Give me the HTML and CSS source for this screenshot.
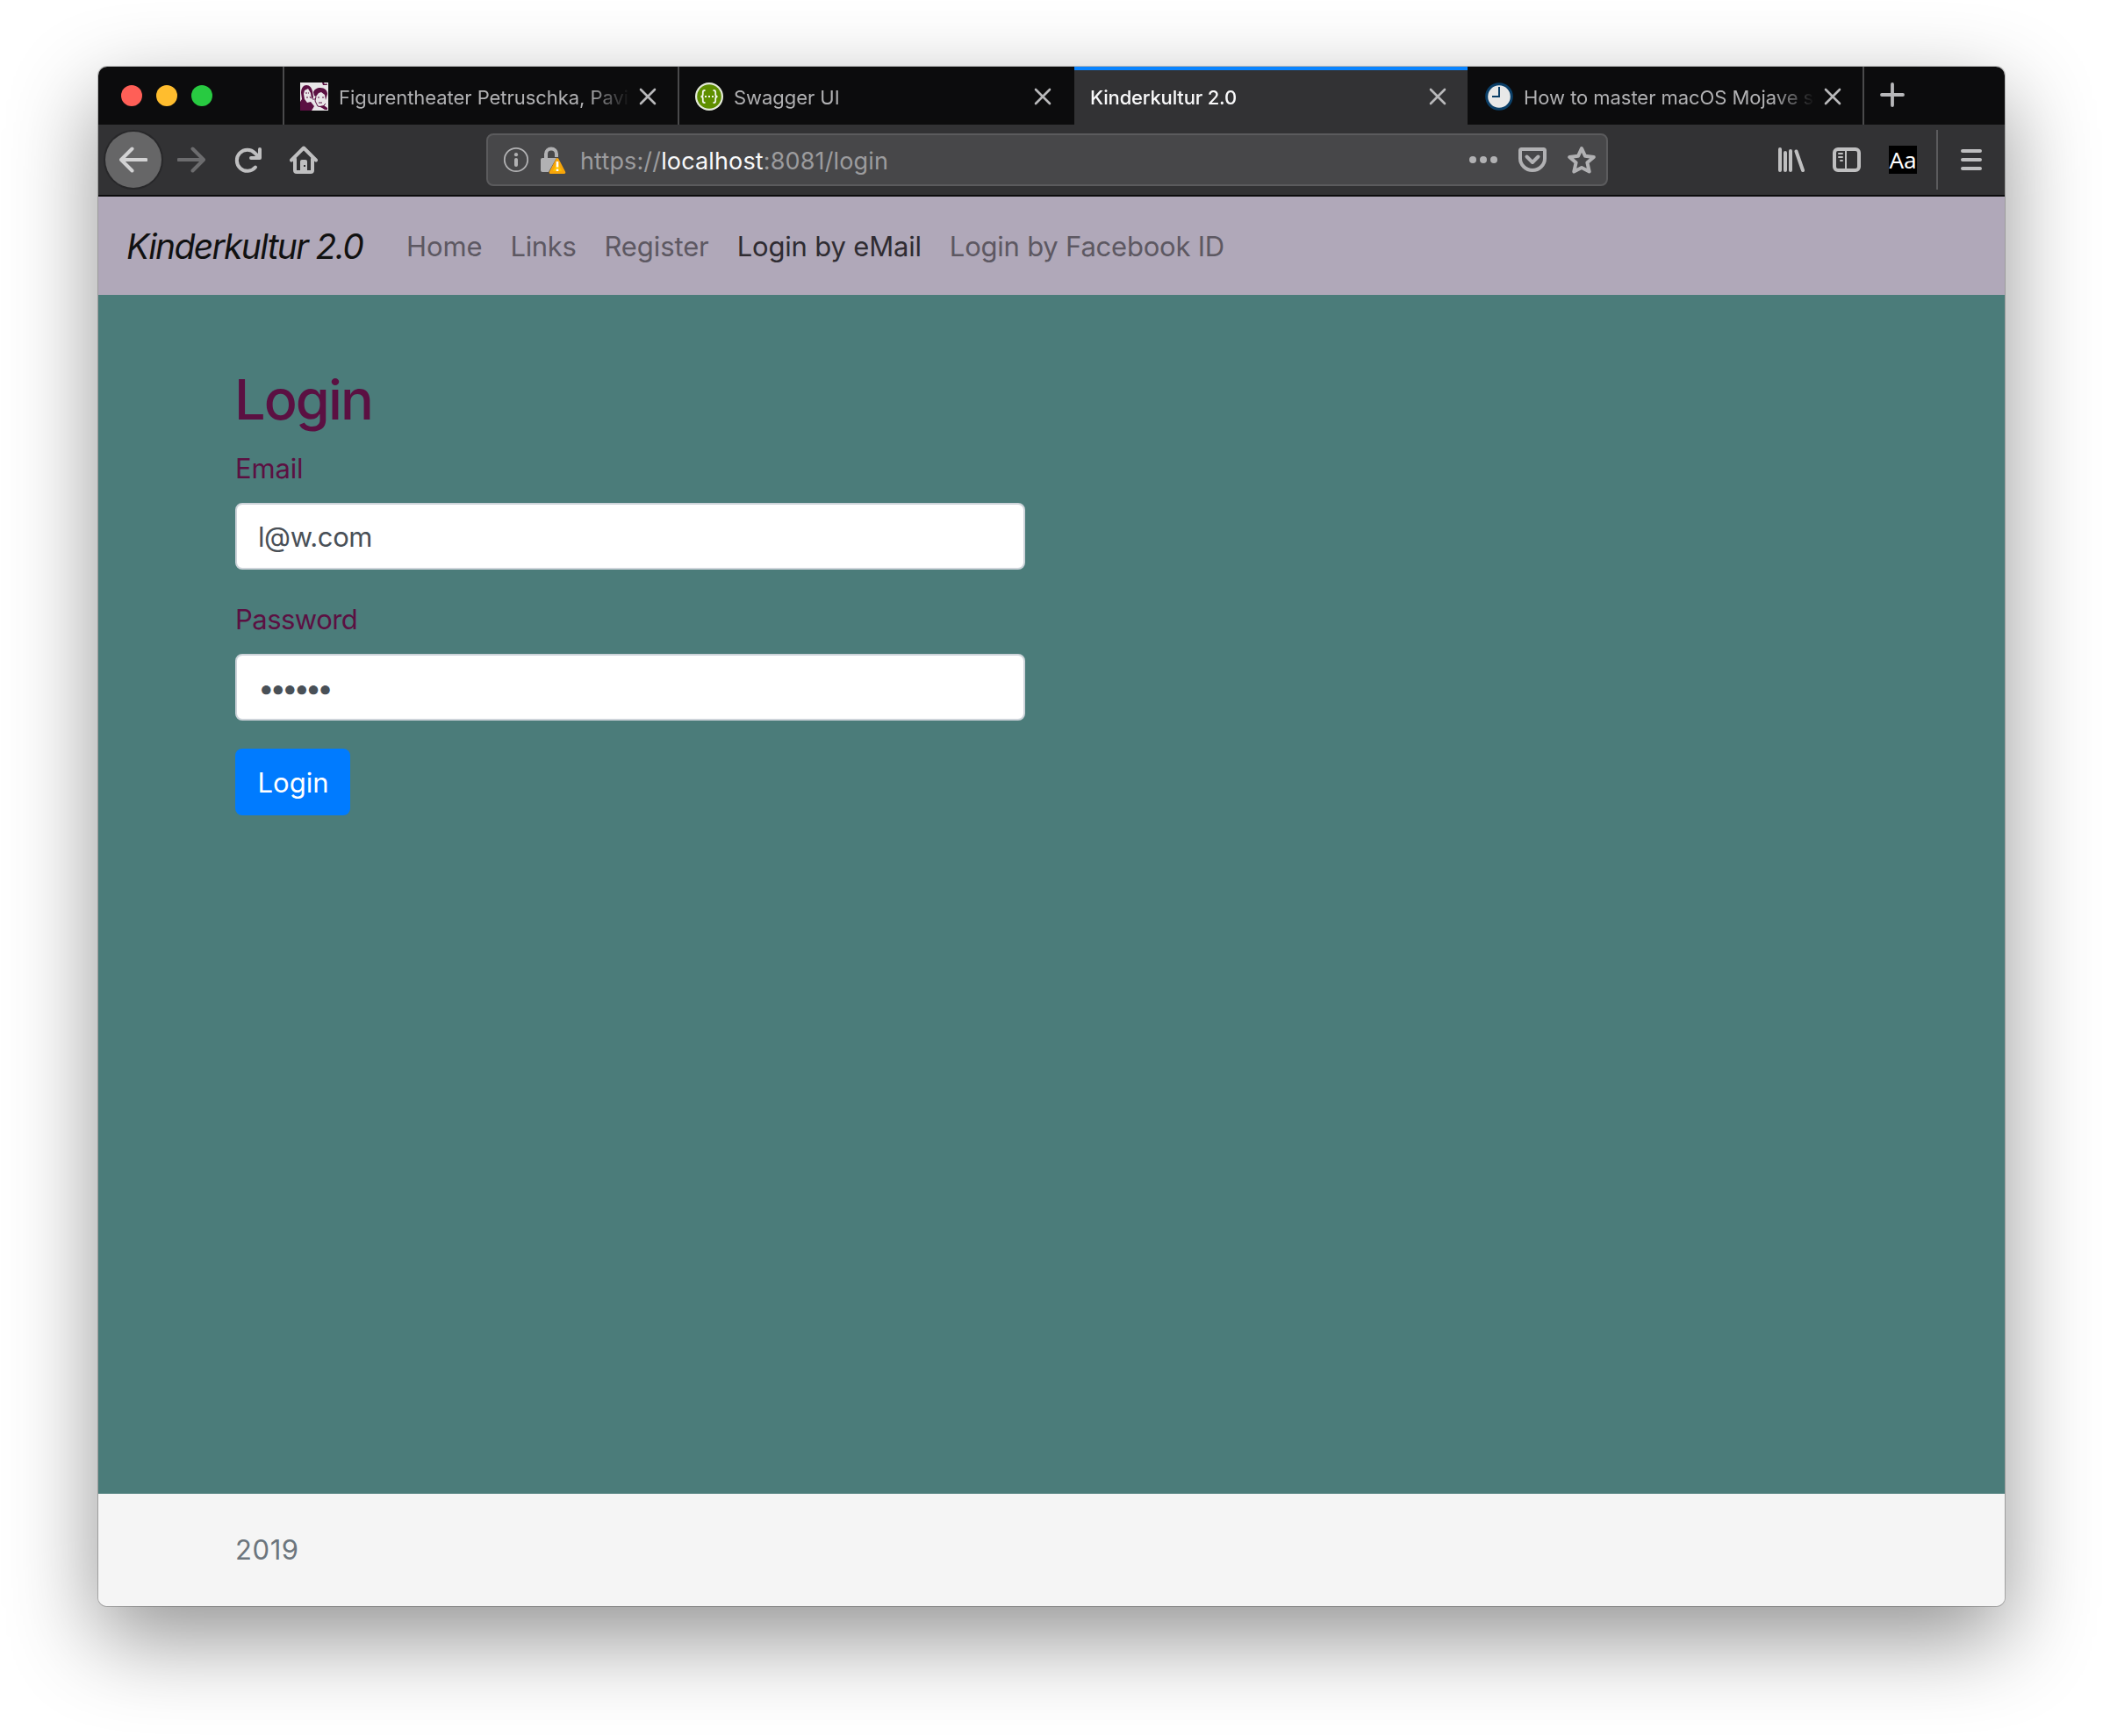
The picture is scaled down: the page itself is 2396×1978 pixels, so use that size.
FILE: index.html
```html
<!DOCTYPE html>
<html lang="en">
<head>
<meta charset="utf-8">
<title>Kinderkultur 2.0</title>
<link rel="stylesheet" href="styles.css">
</head>
<body>
<div class="window">
  <div class="tabbar">
    <div class="lights"><i class="light red"></i><i class="light yellow"></i><i class="light green"></i></div>
    <div class="tab">
      <svg class="favicon" viewBox="0 0 32 32"><rect width="32" height="32" fill="#e9e6e8"/><g fill="#5b1042"><path d="M1 12C1 6 4 3 7 3c4 0 6 3 7 7l1 7-2 2-1-7-3-5-4 2-1 4 1 6 3 4 4-1 4 5-3 5H0V22l2-3z"/><path d="M15 11c1-3 4-5 8-5 5 0 8 3 8 7l-2 7-1-6-4-3-3 1-3 4-2-1z"/><path d="M25 0l1 3h5l-1-2-2 1-1-2zM22 27l5-1 4 3v2h-3z"/></g><path d="M1 25l6 6H0zM11 16l1 2M18 16l-1 5 3 6 5 1 4-4" fill="none" stroke="#5b1042"/><path d="M6 12h2M9 12h1M7 17h2M20 17h2M25 17h2M21 23h4M14 19h3" stroke="#5b1042"/></svg>
      <span class="title">Figurentheater Petruschka, Pavillon</span>
      <svg class="close" viewBox="0 0 20 20"><path d="M2 2l16 16M18 2L2 18"/></svg>
    </div>
    <div class="tab">
      <svg class="favicon" viewBox="0 0 32 32"><circle cx="16" cy="16" r="16" fill="#e4ead9"/><circle cx="16" cy="16" r="13.8" fill="#5f8f00"/><g fill="none" stroke="#f2f5ea" stroke-width="1.8"><path d="M11.5 9H10.800q-2 0-2 2v2.500q0 2.500-2.300 2.500q2.300 0 2.300 2.500V21q0 2 2 2h.7M20.500 9h.7q2 0 2 2v2.500q0 2.500 2.300 2.500q-2.300 0-2.300 2.500V21q0 2-2 2h-.7"/></g><path d="M11 15h2v2h-2zM15 15h2v2h-2zM19 15h2v2h-2z" fill="#f2f5ea"/></svg>
      <span class="title">Swagger UI</span>
      <svg class="close" viewBox="0 0 20 20"><path d="M2 2l16 16M18 2L2 18"/></svg>
    </div>
    <div class="tab active">
      <span class="title">Kinderkultur 2.0</span>
      <svg class="close" viewBox="0 0 20 20"><path d="M2 2l16 16M18 2L2 18"/></svg>
    </div>
    <div class="tab">
      <svg class="favicon" viewBox="0 0 32 32"><circle cx="16" cy="16" r="14.300" fill="#e8e8e8" stroke="#0b3f68" stroke-width="3"/><path d="M16 5v11H8" fill="none" stroke="#0b3f68" stroke-width="2"/></svg>
      <span class="title">How to master macOS Mojave screenshots</span>
      <svg class="close" viewBox="0 0 20 20"><path d="M2 2l16 16M18 2L2 18"/></svg>
    </div>
    <svg class="plus" viewBox="0 0 28 28"><path d="M14 2v24M2 14h24"/></svg>
  </div>

  <div class="toolbar">
    <div class="nav-buttons">
      <span class="tool back"><svg viewBox="0 0 32 32"><path d="M30.500 16H2M14.500 3.500L2 16l12.500 12.500"/></svg></span>
      <span class="tool forward"><svg viewBox="0 0 32 32"><path d="M1.500 16H30M17.500 3.500L30 16 17.500 28.500"/></svg></span>
      <span class="tool"><svg viewBox="0 0 32 32"><path d="M25 24.500A12 12 0 1 1 24.500 8.500L28 12"/><path d="M30 4v10H20"/></svg></span>
      <span class="tool"><svg viewBox="0 0 32 32"><path d="M2 16.500L16 2.500l14 14"/><path d="M6 15v13q0 2 2 2h16q2 0 2-2V15"/><path d="M12 30V18q0-2 2-2h4q2 0 2 2v12z" fill="#bfbfc0" stroke="none"/><rect x="16" y="22" width="2" height="2" fill="#323234" stroke="none"/></svg></span>
    </div>
    <div class="urlbar">
      <svg class="info" viewBox="0 0 32 32"><circle cx="16" cy="16" r="13.200" fill="none" stroke="#b1b1b3" stroke-width="1.800"/><circle cx="16" cy="10.200" r="2.100"/><rect x="14" y="14" width="4" height="10" rx="2"/></svg>
      <svg class="lock" viewBox="0 0 32 32"><path d="M8 16V9.500a6 6 0 0 1 12 0V13" fill="none" stroke="#b1b1b3" stroke-width="4"/><path d="M4 14h16L11 30H4q-2 0-2-2V16q0-2 2-2z"/><path d="M21 15.500L28.800 30.500H13.200z" fill="#ffbf00" stroke="#f7a50a" stroke-width="3" stroke-linejoin="round"/><path d="M21 18v6.500M21 26.500v2.500" stroke="#fff" stroke-width="2.600"/></svg>
      <span class="url">https://<b>localhost</b>:8081/login</span>
      <svg class="u-ico" viewBox="0 0 32 32"><circle cx="4" cy="16" r="4"/><circle cx="16" cy="16" r="4"/><circle cx="28" cy="16" r="4"/></svg>
      <svg class="u-ico" viewBox="0 0 32 32"><path d="M3.500 4h25q1.500 0 1.500 1.500V14.500a14 13.500 0 0 1-28 0V5.500Q2 4 3.500 4z" class="line"/><path d="M9.500 12.500l6.500 6.500 6.500-6.500" class="line"/></svg>
      <svg class="u-ico" viewBox="0 0 32 32"><path d="M16 3l4 8.800 9.800 1.200-7.400 6.300 2.300 10.200L16 25l-8.700 4.500 2.300-10.200L2.200 13l9.800-1.200z" class="line"/></svg>
    </div>
    <div class="actions">
      <svg viewBox="0 0 32 32"><path d="M4 4v24M10 8v20M16 6v22M22.500 6.500L30 28"/></svg>
      <svg viewBox="0 0 32 32"><rect x="2" y="4" width="28" height="24" rx="4"/><path d="M15 4v24" stroke-width="2"/><path d="M7 9h4M7 13h4M9 17h2" stroke-width="2"/></svg>
      <span class="aa">Aa</span>
    </div>
    <div class="divider"></div>
    <svg class="menu" viewBox="0 0 24 24"><path d="M2 2h20M2 12h20M2 22h20"/></svg>
  </div>

  <nav class="navbar">
    <a class="brand">Kinderkultur 2.0</a>
    <a class="link">Home</a>
    <a class="link tight">Links</a>
    <a class="link">Register</a>
    <a class="link current">Login by eMail</a>
    <a class="link">Login by Facebook ID</a>
  </nav>

  <main class="content">
    <h1>Login</h1>
    <label for="email">Email</label>
    <input id="email" type="text" value="l@w.com">
    <label class="tight" for="password">Password</label>
    <input id="password" type="password" value="secret">
    <button>Login</button>
  </main>

  <footer class="footer"><span>2019</span></footer>
</div>
</body>
</html>
```
FILE: styles.css
```css
* { box-sizing: border-box; }

body {
  margin: 0;
  height: 1978px;
  padding: 76px 112px 148px;
  background: #fff;
  font-family: Inter, "Liberation Sans", sans-serif;
  overflow: hidden;
}

svg { display: block; flex: none; }

.window {
  height: 1754px;
  display: flex;
  flex-direction: column;
  border-radius: 10px;
  overflow: hidden;
  box-shadow: 0 0 0 1px rgba(0, 0, 0, .22), 0 36px 100px rgba(0, 0, 0, .43);
}

/* Tab strip */
.tabbar {
  flex: none;
  display: flex;
  align-items: center;
  height: 66px;
  background: #0c0c0d;
}

.lights {
  display: flex;
  gap: 16px;
  width: 212px;
  height: 66px;
  padding: 21px 0 0 26px;
  border-right: 2px solid #4a4a4b;
}

.light { width: 24px; height: 24px; border-radius: 50%; }
.red { background: #ff5f57; }
.yellow { background: #ffbd2e; }
.green { background: #28ca41; }

.tab {
  display: flex;
  align-items: center;
  width: 450px;
  height: 66px;
  padding: 2px 24px 0 18px;
  border-right: 2px solid #4a4a4b;
}

.tab:has(+ .active) { border-right-color: #0c0c0d; }
.tab.active {
  background: #323234;
  border-right-color: #0c0c0d;
  box-shadow: inset 0 4px #0a84ff;
}

.favicon { width: 32px; height: 32px; margin-right: 12px; }

.title {
  flex: 1;
  overflow: hidden;
  white-space: nowrap;
  font-size: 22px;
  line-height: 30px;
  letter-spacing: -.05px;
  padding-top: 2px;
  color: #b1b1b3;
  -webkit-mask-image: linear-gradient(to left, transparent 0, #000 48px);
  mask-image: linear-gradient(to left, transparent 0, #000 48px);
}
.active .title { color: #f9f9fa; font-weight: 500; letter-spacing: -.18px; }

.close { width: 20px; height: 20px; margin-left: 10px; fill: none; stroke: #b8b8ba; stroke-width: 2.6; stroke-linecap: round; }
.plus { width: 28px; height: 28px; margin: -2px 0 0 18px; fill: none; stroke: #b8b8ba; stroke-width: 3.8; stroke-linecap: round; }

/* Navigation toolbar */
.toolbar {
  flex: none;
  display: flex;
  align-items: center;
  height: 82px;
  background: #323234;
  border-bottom: 2px solid #0c0c0d;
}

.nav-buttons { display: flex; width: 442px; padding-left: 8px; }
.tool { display: flex; align-items: center; justify-content: center; width: 64px; height: 64px; }
.tool svg { width: 32px; height: 32px; fill: none; stroke: #bfbfc0; stroke-width: 4; stroke-linecap: round; stroke-linejoin: round; }
.back { margin-right: 2px; border-radius: 50%; background: #666667; box-shadow: 0 0 0 2px #28282a; }
.back svg { stroke: #d2d2d3; }
.forward svg { stroke: #6c6c6e; }

.urlbar {
  display: flex;
  align-items: center;
  width: 1278px;
  height: 60px;
  padding: 0 12px 0 16px;
  border: 2px solid #5b5b5d;
  border-radius: 8px;
  background: #474749;
  fill: #b1b1b3;
}
.info, .lock, .u-ico { width: 32px; height: 32px; }
.lock { margin-left: 10px; }
.url { flex: 1; margin-left: 15px; padding-top: 3px; font-size: 27px; line-height: 40px; letter-spacing: .14px; color: #9c9c9e; white-space: nowrap; }
.url b { font-weight: 400; color: #f9f9fa; }
.u-ico { margin-left: 24px; }
.u-ico .line { fill: none; stroke: #b1b1b3; stroke-width: 4; stroke-linecap: round; stroke-linejoin: round; }

.actions { display: flex; gap: 32px; margin-left: 192px; }
.actions svg { width: 32px; height: 32px; fill: none; stroke: #bfbfc0; stroke-width: 4; stroke-linecap: round; }
.aa {
  width: 32px;
  height: 32px;
  background: #000;
  color: #fff;
  font: 26px/33px "Noto Sans", sans-serif;
  text-align: center;
}
.divider { width: 2px; height: 68px; margin-left: 22px; background: #5b5b5d; }
.menu { width: 24px; height: 24px; margin-left: 26px; fill: none; stroke: #bfbfc0; stroke-width: 4; stroke-linecap: round; }

/* Site navigation */
.navbar {
  flex: none;
  display: flex;
  align-items: center;
  height: 112px;
  padding: 1px 32px 0;
  background: #b0a8b9;
  white-space: nowrap;
}
.brand { width: 319px; font-size: 39px; font-style: italic; letter-spacing: -1.65px; color: #111; }
.link { margin-right: 32px; font-size: 31px; letter-spacing: -.1px; color: #5d5862; }
.link.tight { letter-spacing: -.35px; }
.link.current { letter-spacing: -.18px; color: #2f2c32; }
.link:last-child { letter-spacing: -.22px; }

/* Login page */
.content {
  flex: 1;
  display: flex;
  flex-direction: column;
  align-items: flex-start;
  padding: 80px 156px 0;
  background: #4b7c7a;
  color: #5b1042;
}
h1 { margin: 0 0 16px -1px; padding-top: 1px; font-size: 63px; line-height: 76px; font-weight: 500; letter-spacing: -1.9px; }
label { height: 48px; margin-bottom: 16px; padding: .5px 0 0; font-size: 31px; line-height: 48px; letter-spacing: -.15px; }
label.tight { letter-spacing: -.52px; }
input {
  width: 900px;
  height: 76px;
  margin: 0 0 32px;
  padding: 1px 24px 0;
  border: 2px solid #ced4da;
  border-radius: 8px;
  background: #fff;
  color: #495057;
  font: 31px/48px Inter, sans-serif;
  letter-spacing: -.4px;
}
input[type="password"] { font-size: 33px; letter-spacing: -5.1px; }
button {
  width: 131px;
  height: 76px;
  padding: 1px 0 0 1px;
  border: 0;
  border-radius: 8px;
  background: #007bff;
  color: #fff;
  font: 31px/48px Inter, sans-serif;
}

.footer {
  flex: none;
  height: 128px;
  padding: 40px 156px 0;
  background: #f5f5f5;
  color: #6c757d;
  font-size: 31px;
  line-height: 48px;
  letter-spacing: .6px;
}
```
